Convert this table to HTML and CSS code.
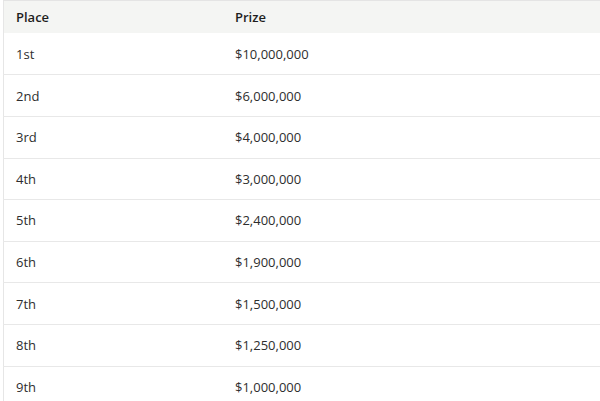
FILE: index.html
```html
<!DOCTYPE html>
<html>
<head>
<meta charset="utf-8">
<link rel="stylesheet" href="styles.css">
</head>
<body>
<table class="prizes">
  <thead>
    <tr><th class="c1">Place</th><th class="c2">Prize</th></tr>
  </thead>
  <tbody>
    <tr><td class="c1">1st</td><td class="c2">$10,000,000</td></tr>
    <tr><td class="c1">2nd</td><td class="c2">$6,000,000</td></tr>
    <tr><td class="c1">3rd</td><td class="c2">$4,000,000</td></tr>
    <tr><td class="c1">4th</td><td class="c2">$3,000,000</td></tr>
    <tr><td class="c1">5th</td><td class="c2">$2,400,000</td></tr>
    <tr><td class="c1">6th</td><td class="c2">$1,900,000</td></tr>
    <tr><td class="c1">7th</td><td class="c2">$1,500,000</td></tr>
    <tr><td class="c1">8th</td><td class="c2">$1,250,000</td></tr>
    <tr><td class="c1">9th</td><td class="c2">$1,000,000</td></tr>
  </tbody>
</table>
</body>
</html>
```
FILE: styles.css
```css
html, body {
  margin: 0;
  padding: 0;
  background: #ffffff;
}
body {
  padding-left: 3px;
  font-family: "Open Sans", "Liberation Sans", sans-serif;
  font-size: 13px;
  color: #2e2e2e;
}
.prizes {
  border-collapse: collapse;
  width: 597px;
  border-left: 1px solid #e6e6e6;
  border-top: 1px solid #e4e4e4;
}
.prizes th,
.prizes td {
  text-align: left;
  padding: 0 0 0 12px;
  vertical-align: middle;
}
.prizes th {
  height: 32px;
  background: #f4f5f3;
  font-weight: 600;
  color: #1e1e1e;
}
.prizes td {
  height: 40.6px;
  border-bottom: 1px solid #e8e8e8;
}
.prizes tbody tr:first-child td {
  height: 41.4px;
}
.c1 {
  width: 207px;
}
```
